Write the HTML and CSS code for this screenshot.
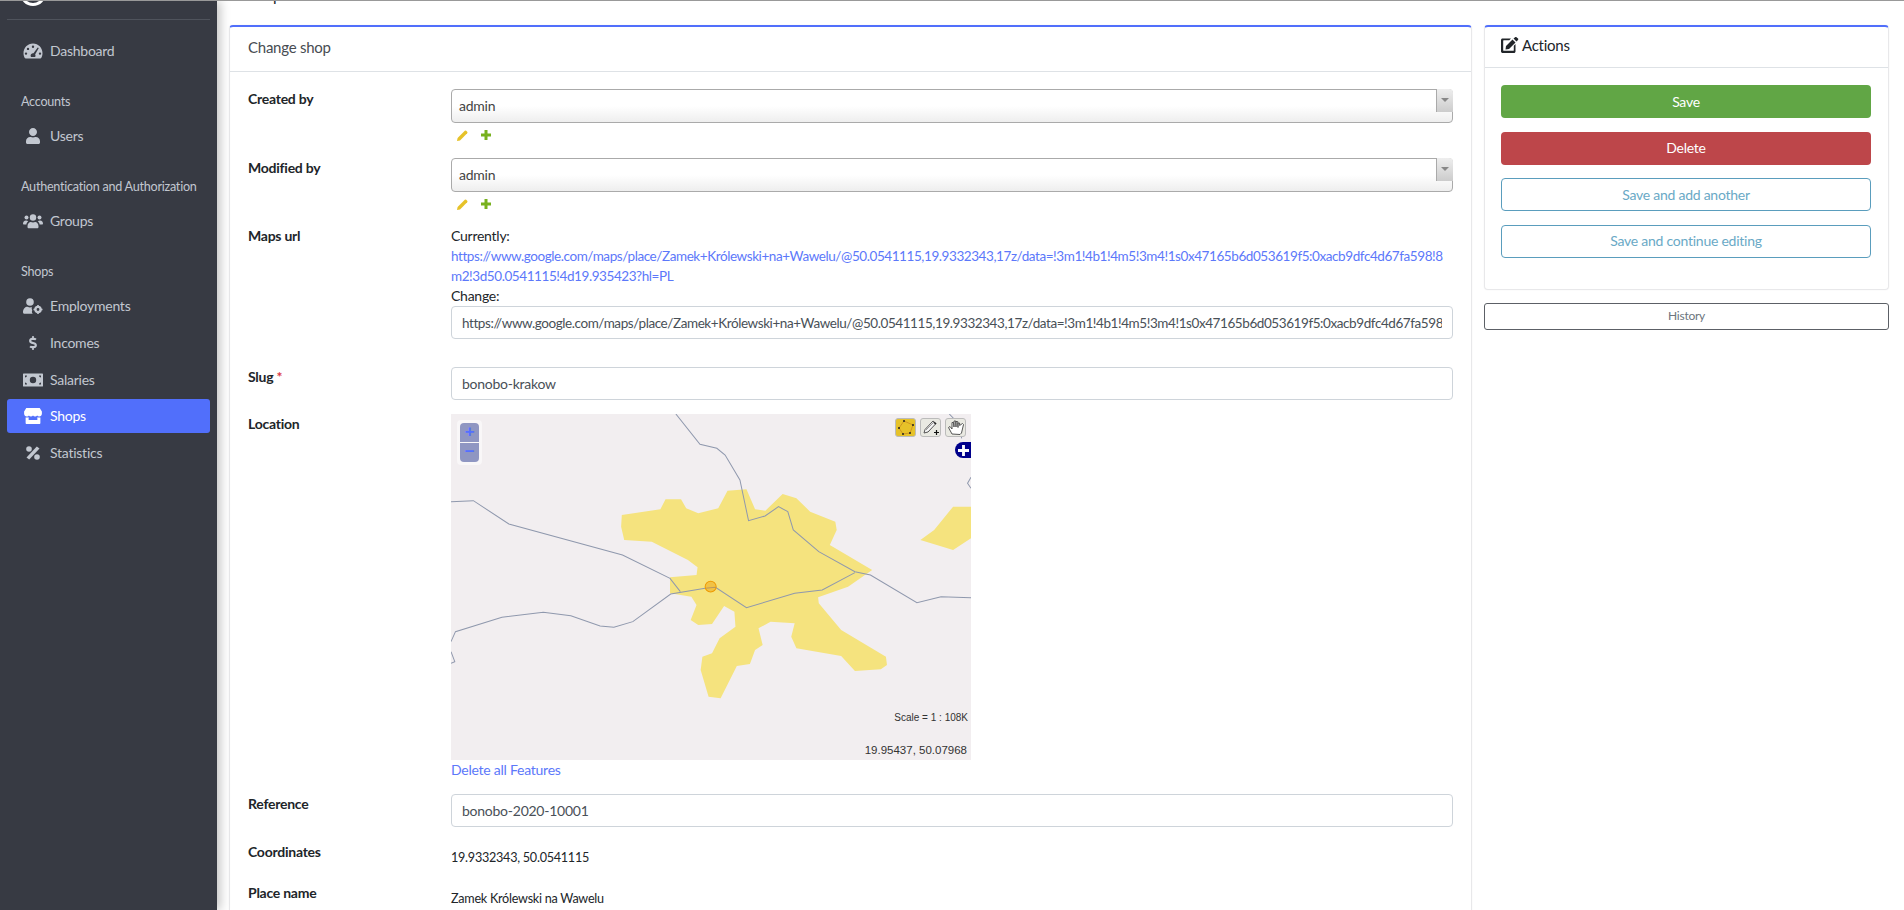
FILE: index.html
```html
<!DOCTYPE html>
<html lang="en">
<head>
    <meta charset="UTF-8">
    <meta name="viewport" content="width=device-width, initial-scale=1.0">
    <title>Change shop</title>
    <link rel="stylesheet" href="styles.css">
</head>
<body>
    <aside class="sidebar">
        <div class="brand">
            <svg class="brand-logo" width="28" height="28" viewBox="0 0 28 28"><circle cx="14" cy="14" r="11.5" fill="none" stroke="#fff" stroke-width="3"/></svg>
        </div>
        <nav class="nav">
            <a class="nav-item"><svg class="nav-icon" viewBox="0 0 20 16"><path fill="currentColor" fill-rule="evenodd" d="M10 0.5C4.6 0.5 0.5 4.8 0.5 10.2c0 1.800.5 3.400 1.300 4.800.2.300.5.500.9.500h14.600c.4 0 .7-.2.900-.5.800-1.400 1.300-3 1.300-4.800C19.500 4.800 15.400.5 10 .5zM10 2.600a1.200 1.200 0 1 1 0 2.400 1.200 1.200 0 0 1 0-2.400zM5 4.700a1.200 1.200 0 1 1 0 2.400 1.200 1.200 0 0 1 0-2.400zM3 9.400a1.200 1.200 0 1 1 0 2.400 1.200 1.200 0 0 1 0-2.400zM17 9.400a1.200 1.200 0 1 1 0 2.400 1.200 1.200 0 0 1 0-2.400zM14.700 4.500l1.100.5-3.700 6.400c.3.400.4.800.4 1.300 0 .5-.2 1-.4 1.300H8.100c-.3-.4-.5-.8-.5-1.300 0-1.300 1.100-2.400 2.400-2.400h.5z"/></svg><span>Dashboard</span></a>
            <div class="nav-header">Accounts</div>
            <a class="nav-item"><svg class="nav-icon" viewBox="0 0 448 512"><path fill="currentColor" d="M224 256c70.700 0 128-57.300 128-128S294.700 0 224 0 96 57.300 96 128s57.300 128 128 128zm89.600 32h-16.700c-22.200 10.200-46.900 16-72.900 16s-50.600-5.800-72.900-16h-16.700C60.200 288 0 348.200 0 422.400V464c0 26.500 21.500 48 48 48h352c26.500 0 48-21.500 48-48v-41.600c0-74.200-60.200-134.400-134.400-134.400z"/></svg><span>Users</span></a>
            <div class="nav-header">Authentication and Authorization</div>
            <a class="nav-item"><svg class="nav-icon" viewBox="0 0 20 16"><g fill="currentColor"><circle cx="3.500" cy="4.500" r="2"/><circle cx="16.500" cy="4.500" r="2"/><circle cx="10" cy="4.500" r="3.200"/><path d="M0 11c0-2 1-3.500 3-3.500 1 0 1.600.3 2.200.8-1 .8-1.700 1.900-1.800 3.200H1c-.6 0-1-.4-1-1zM20 11c0-2-1-3.500-3-3.500-1 0-1.600.3-2.200.8 1 .8 1.700 1.900 1.800 3.200H19c.6 0 1-.4 1-1zM4.500 13.300c0-2.500 1.600-4.300 3.300-4.300.8 0 1.300.4 2.200.4s1.400-.4 2.200-.4c1.700 0 3.300 1.800 3.300 4.300v.7c0 .8-.6 1.300-1.300 1.300H5.800c-.7 0-1.300-.5-1.300-1.300z"/></g></svg><span>Groups</span></a>
            <div class="nav-header">Shops</div>
            <a class="nav-item"><svg class="nav-icon" viewBox="0 0 20 16"><g fill="currentColor"><circle cx="7" cy="4" r="3.800"/><path d="M0 14.300c0-3.500 2.200-5.500 4.500-5.500 1 .5 1.800.7 2.500.7s1-.1 1.800-.4c-.3 1.400 0 2.300.5 3.100-.6 1-.5 2.500.5 3.500v.1H1.300C.6 15.800 0 15.100 0 14.300z"/><circle cx="15" cy="11.500" r="2.600" fill="none" stroke="currentColor" stroke-width="2.400"/><path d="M14.200 7h1.600v2h-1.600zM14.200 14h1.600v2h-1.600zM10.500 10.700h2v1.600h-2zM17.500 10.700h2v1.600h-2z"/></g></svg><span>Employments</span></a>
            <a class="nav-item"><svg class="nav-icon nav-icon-small" viewBox="0 0 288 512"><path fill="currentColor" d="M209.200 233.400l-108-31.600C88.700 198.200 80 186.500 80 173.500c0-16.300 13.200-29.500 29.500-29.500h66.300c12.200 0 24.200 3.700 34.200 10.500 6.100 4.100 14.300 3.100 19.500-2l34.800-34c7.100-6.900 6.100-18.400-1.800-24.500C238 74.800 207.400 64.100 176 64V16c0-8.800-7.200-16-16-16h-32c-8.800 0-16 7.200-16 16v48h-2.500C45.800 64-5.400 118.700.5 183.600c4.200 46.100 39.400 83.600 83.800 96.600l102.500 30c12.500 3.700 21.200 15.300 21.200 28.300 0 16.300-13.200 29.500-29.500 29.500h-66.300C100 368 88 364.300 78 357.500c-6.100-4.100-14.300-3.100-19.500 2l-34.800 34c-7.100 6.900-6.100 18.400 1.800 24.500 24.500 19.200 55.100 29.900 86.500 30v48c0 8.800 7.200 16 16 16h32c8.800 0 16-7.200 16-16v-48.200c46.600-.9 90.300-28.600 105.700-72.700 21.500-61.600-14.600-124.800-72.500-141.700z"/></svg><span>Incomes</span></a>
            <a class="nav-item"><svg class="nav-icon" viewBox="0 0 20 13"><path fill="currentColor" fill-rule="evenodd" d="M.6 0h18.800c.3 0 .6.300.6.600v11.800c0 .3-.3.600-.6.600H.6c-.3 0-.6-.3-.6-.6V.6C0 .3.300 0 .6 0zM10 3.300a3.200 3.200 0 1 0 0 6.400 3.200 3.200 0 0 0 0-6.400zM2 2v2c1.100 0 2-.9 2-2zM16 2c0 1.100.9 2 2 2V2zM2 9v2h2c0-1.100-.9-2-2-2zM18 9c-1.100 0-2 .9-2 2h2z"/></svg><span>Salaries</span></a>
            <a class="nav-item active"><svg class="nav-icon" viewBox="0 0 20 18"><path fill="currentColor" fill-rule="evenodd" d="M3 0h14c.4 0 .7.200.9.500L20 4v2.500c0 1.800-1.300 3-3 3-.9 0-1.800-.4-2.300-1.100-.6.700-1.500 1.100-2.400 1.100s-1.700-.4-2.300-1.100c-.6.700-1.400 1.100-2.300 1.100s-1.800-.4-2.400-1.100C5 9.100 4 9.500 3 9.500c-1.700 0-3-1.200-3-3V4L2.100.5C2.300.2 2.600 0 3 0zM1.700 10.600c.4.100.9.200 1.300.2.800 0 1.500-.2 2.100-.5v3.200h9.800v-3.200c.6.300 1.300.5 2.100.5.400 0 .9-.1 1.300-.2v6.200c0 .7-.5 1.200-1.200 1.200H2.900c-.7 0-1.200-.5-1.200-1.200z"/></svg><span>Shops</span></a>
            <a class="nav-item"><svg class="nav-icon nav-icon-small" viewBox="0 0 14 14"><g fill="currentColor"><circle cx="3" cy="3" r="2.800"/><circle cx="11" cy="11" r="2.800"/><path d="M10.800.5l2.700 2L3.200 13.500l-2.700-2z"/></g></svg><span>Statistics</span></a>
        </nav>
    </aside>

    <main class="content">
        <h1 class="page-title">Shops</h1>
        <div class="columns">
            <section class="card">
                <div class="card-header">Change shop</div>
                <form class="form">
                    <div class="field field-first">
                        <label>Created by</label>
                        <div>
                            <div class="select"><span>admin</span><b class="select-arrow"></b></div>
                            <div class="related">
                                <svg width="11" height="11" viewBox="0 0 11 11"><path fill="#e6c229" d="M0 11l.6-3L7.800.8a1 1 0 0 1 1.400 0l1 1a1 1 0 0 1 0 1.400L3 10.400z"/></svg>
                                <svg width="10" height="10" viewBox="0 0 10 10"><path fill="#78b11e" d="M3.500 0h3v3.500H10v3H6.500V10h-3V6.500H0v-3h3.500z"/></svg>
                            </div>
                        </div>
                    </div>
                    <div class="field">
                        <label>Modified by</label>
                        <div>
                            <div class="select"><span>admin</span><b class="select-arrow"></b></div>
                            <div class="related">
                                <svg width="11" height="11" viewBox="0 0 11 11"><path fill="#e6c229" d="M0 11l.6-3L7.800.8a1 1 0 0 1 1.400 0l1 1a1 1 0 0 1 0 1.400L3 10.400z"/></svg>
                                <svg width="10" height="10" viewBox="0 0 10 10"><path fill="#78b11e" d="M3.500 0h3v3.500H10v3H6.500V10h-3V6.500H0v-3h3.500z"/></svg>
                            </div>
                        </div>
                    </div>
                    <div class="field field-url">
                        <label>Maps url</label>
                        <div>
                            <div class="line">Currently:</div>
                            <a class="url-link">https://www.google.com/maps/place/Zamek+Królewski+na+Wawelu/@50.0541115,19.9332343,17z/data=!3m1!4b1!4m5!3m4!1s0x47165b6d053619f5:0xacb9dfc4d67fa598!8m2!3d50.0541115!4d19.935423?hl=PL</a>
                            <div class="line">Change:</div>
                            <input class="input input-url" type="text" value="https://www.google.com/maps/place/Zamek+Królewski+na+Wawelu/@50.0541115,19.9332343,17z/data=!3m1!4b1!4m5!3m4!1s0x47165b6d053619f5:0xacb9dfc4d67fa598!8m2!3d50.0541115!4d19.935423?hl=PL">
                        </div>
                    </div>
                    <div class="field field-slug">
                        <label>Slug <em>*</em></label>
                        <input class="input" type="text" value="bonobo-krakow">
                    </div>
                    <div class="field field-location">
                        <label>Location</label>
                        <div>
                            <div class="map">
                                <svg class="map-layer" viewBox="32 -198 1510 1038" preserveAspectRatio="none">
                                    <polygon fill="#f5e37e" points="528,105 640,88 655,58 700,58 715,85 750,100 808,85 835,32 890,28 915,88 945,92 995,42 1035,55 1075,95 1148,125 1152,150 1132,195 1255,270 1185,320 1098,352 1100,370 1165,450 1295,530 1298,555 1280,568 1205,573 1165,528 1035,505 1020,470 1030,430 960,425 925,445 937,495 915,510 900,552 862,558 815,655 780,650 757,570 762,530 790,520 812,475 858,440 855,395 825,378 790,432 750,435 728,420 745,375 730,350 668,340 668,292 745,285 748,262 720,240 615,185 535,180 526,140"/>
                                    <polygon fill="#f5e37e" points="1395,180 1435,150 1490,80 1542,80 1542,175 1490,210"/>
                                    <g class="roads">
                                        <polyline vector-effect="non-scaling-stroke" points="32,65 97,62 200,132 530,225 668,295 698,335"/>
                                        <polyline vector-effect="non-scaling-stroke" points="685,-198 755,-107 804,-95 828,-75 871,0 896,122 944,108 983,80 1010,95 1026,150 1100,215 1205,275 1250,285 1385,368 1455,350 1542,353"/>
                                        <polyline vector-effect="non-scaling-stroke" points="32,485 45,455 180,412 300,397 380,407 465,438 505,442 560,425 670,342 770,325 800,322 890,383 1030,340 1110,330 1205,278"/>
                                        <polyline vector-effect="non-scaling-stroke" points="32,515 43,545 32,550"/>
                                        <polyline vector-effect="non-scaling-stroke" points="1479,-198 1505,-170 1515,-125"/>
                                        <polyline vector-effect="non-scaling-stroke" points="1542,-8 1532,10 1542,25"/>
                                    </g>
                                    <circle cx="786" cy="320" r="16" fill="#ee9900" fill-opacity=".45" stroke="#ee9900" stroke-width="1" vector-effect="non-scaling-stroke"/>
                                </svg>
                                <div class="map-zoom">
                                    <span class="zoom-btn zoom-in">+</span>
                                    <span class="zoom-btn zoom-out">−</span>
                                </div>
                                <div class="map-tools">
                                    <span class="tool tool-on"><svg width="20" height="19" viewBox="0 0 20 19"><polygon points="3,10 8,3 17,7 14,15 7,16" fill="none" stroke="#c98a20" stroke-width=".8"/><g fill="#222"><circle cx="3" cy="10" r="1"/><circle cx="8" cy="3" r="1"/><circle cx="17" cy="7" r="1"/><circle cx="14" cy="15" r="1"/><circle cx="7" cy="16" r="1"/></g></svg></span>
                                    <span class="tool"><svg width="20" height="19" viewBox="0 0 20 19"><path d="M3 15l1-3.500L12 3l3 2.500-8 8.500z" fill="#f4f4f4" stroke="#555" stroke-width="1"/><path d="M5 12l8-8" stroke="#999" stroke-width="1"/><path d="M13 4.500l2 1.500" stroke="#222" stroke-width="1.500"/><path d="M15.500 12v5M13 14.500h5" stroke="#111" stroke-width="1.200"/></svg></span>
                                    <span class="tool"><svg width="20" height="19" viewBox="0 0 20 19"><path d="M6 16L2.500 9.500 4 8.500l2 2.500V4.500h1.500L8 9V3h1.700L10 9V3.500h1.700L12 9.500V5h1.600v2.500L16.500 5.500l1 1L15.500 15l-1.500 1.500z" fill="#fff" stroke="#444" stroke-width=".9"/></svg></span>
                                </div>
                                <span class="map-add"><svg width="11" height="11" viewBox="0 0 10 10"><path fill="#fff" d="M3.700 0h2.600v3.700H10v2.600H6.300V10H3.700V6.300H0V3.700h3.700z"/></svg></span>
                                <span class="map-scale">Scale = 1 : 108K</span>
                                <span class="map-pos">19.95437, 50.07968</span>
                            </div>
                            <a class="delete-link">Delete all Features</a>
                        </div>
                    </div>
                    <div class="field">
                        <label>Reference</label>
                        <input class="input" type="text" value="bonobo-2020-10001">
                    </div>
                    <div class="field">
                        <label>Coordinates</label>
                        <div class="readonly">19.9332343, 50.0541115</div>
                    </div>
                    <div class="field">
                        <label>Place name</label>
                        <div class="readonly">Zamek Królewski na Wawelu</div>
                    </div>
                </form>
            </section>

            <aside class="side">
                <section class="card">
                    <div class="card-header card-header-actions">
                        <svg width="18" height="16" viewBox="0 0 18 16"><path fill="#212529" fill-rule="evenodd" d="M1.500 1.500H10L8.300 3.200H2.800a.6.600 0 0 0-.6.600v9.400c0 .3.300.6.600.6h9.400c.3 0 .6-.3.600-.6V8.700l1.700-1.700v7.500c0 .8-.7 1.500-1.500 1.500h-11C.7 16 0 15.300 0 14.500V3c0-.8.700-1.500 1.500-1.500z"/><path fill="#212529" d="M5 9l-.5 3.500L8 12l6.500-6.500-3-3zM12.500 1.500l3 3 1.500-1.500c.4-.4.400-1 0-1.400L15.500.3c-.4-.4-1-.4-1.400 0z"/></svg>
                        Actions
                    </div>
                    <div class="actions">
                        <button class="btn btn-save">Save</button>
                        <button class="btn btn-delete">Delete</button>
                        <button class="btn btn-outline">Save and add another</button>
                        <button class="btn btn-outline">Save and continue editing</button>
                    </div>
                </section>
                <button class="btn-history">History</button>
            </aside>
        </div>
    </main>
</body>
</html>
```

FILE: styles.css
```css
* {
    margin: 0;
    padding: 0;
    box-sizing: border-box;
}
body {
    display: flex;
    height: 910px;
    overflow: hidden;
    border-top: 1px solid #999;
    background-color: #fff;
    color: #212529;
    font-family: Lato, "Noto Sans", sans-serif;
    font-size: 14px;
    line-height: 20px;
    letter-spacing: -0.25px;
}

/* sidebar */
.sidebar {
    flex: 0 0 217px;
    padding: 0 7px;
    background-color: #373a43;
    box-shadow: 3px 0 10px rgba(0,0,0,0.25);
    position: relative;
    z-index: 1;
}
.brand {
    height: 19px;
    overflow: hidden;
    border-bottom: 1px solid #4f535c;
    padding-left: 12px;
}
.brand-logo {
    display: block;
    margin-top: -22px;
}
.nav {
    display: flex;
    flex-direction: column;
    gap: 2.8px;
    margin-top: 14px;
    color: #c2c7d0;
}
.nav-item {
    display: flex;
    align-items: center;
    height: 34px;
    border-radius: 3px;
}
.nav-item span {
    margin-left: 7px;
}
.nav-item.active {
    background-color: #516ffb;
    color: #fff;
}
.nav-icon {
    width: 20px;
    height: 16px;
    margin-left: 16px;
    flex: none;
}
.nav-icon-small {
    height: 14px;
}
.nav-header {
    height: 45.4px;
    padding: 21px 0 0 14px;
    font-size: 12.6px;
    white-space: nowrap;
}

/* main area */
.content {
    flex: 1;
    min-width: 0;
    padding-left: 12px;
    padding-right: 15px;
}
.page-title {
    margin: -16px 0 20px 19px;
    height: 20px;
    font-size: 15.5px;
    font-weight: 400;
    line-height: 20px;
}
.columns {
    display: grid;
    grid-template-columns: 1243px 405px;
    gap: 12px;
    align-items: start;
}
.card {
    border: 1px solid #e8e8ea;
    border-top: 2px solid #516ffb;
    border-radius: 4px;
    background-color: #fff;
    box-shadow: 0 0 2px rgba(0,0,0,0.06);
}
.card-header {
    height: 45px;
    padding: 10px 18px 0;
    border-bottom: 1px solid #dee2e6;
    color: #474c52;
    font-size: 15px;
}
.form {
    padding: 17px 18px 30px;
}
.field {
    display: grid;
    grid-template-columns: 203px 1fr;
    margin-bottom: 15px;
}
.field label {
    font-weight: 700;
}
.field label em {
    color: #dc3545;
    font-style: normal;
}
.field-first {
    margin-bottom: 16px;
}
.field-url {
    margin-bottom: 28px;
}
.field-slug {
    margin-bottom: 14px;
}
.field-location {
    margin-bottom: 14px;
}

/* select2 style box */
.select {
    display: flex;
    justify-content: space-between;
    height: 34px;
    padding-left: 7px;
    border: 1px solid #aaa;
    border-radius: 4px;
    background: linear-gradient(#fff 50%, #eee);
    color: #444;
    line-height: 31px;
}
.select-arrow {
    position: relative;
    width: 17px;
    height: 23px;
    margin: -1px -1px 0 0;
    border-left: 1px solid #aaa;
    border-radius: 0 4px 0 0;
    background: linear-gradient(#eee, #ccc);
}
.select-arrow::after {
    content: "";
    position: absolute;
    left: 4px;
    top: 9px;
    border: 4px solid transparent;
    border-top: 4px solid #888;
}
.related {
    display: flex;
    align-items: center;
    gap: 13px;
    height: 14px;
    margin: 5px 0 0 6px;
}
.input {
    display: block;
    width: 100%;
    height: 33px;
    padding: 0 10px;
    border: 1px solid #ced4da;
    border-radius: 4px;
    color: #495057;
    font: inherit;
    letter-spacing: inherit;
    background-color: #fff;
}
.input-url {
    font-size: 13.5px;
    letter-spacing: -0.42px;
}
.line {
    height: 20px;
}
.url-link {
    display: block;
    color: #5c78fa;
    font-size: 13.5px;
    letter-spacing: -0.42px;
    word-break: break-all;
}
.readonly {
    padding-top: 6px;
    font-size: 12.6px;
}

/* map widget */
.map {
    position: relative;
    width: 520px;
    height: 346px;
    overflow: hidden;
    background-color: #f2eef0;
}
.map-layer {
    display: block;
    width: 520px;
    height: 346px;
}
.roads {
    fill: none;
    stroke: #8f98ad;
    stroke-width: 1;
}
.map-zoom {
    position: absolute;
    left: 6px;
    top: 6px;
    display: flex;
    flex-direction: column;
    gap: 1px;
    padding: 3px;
    border-radius: 4px;
    background-color: rgba(255,255,255,0.5);
}
.zoom-btn {
    width: 19px;
    height: 19px;
    background-color: #8f96c2;
    color: #5470ff;
    font-family: "Liberation Sans", sans-serif;
    font-size: 17px;
    font-weight: 700;
    line-height: 17px;
    text-align: center;
}
.zoom-in {
    border-radius: 4px 4px 0 0;
}
.zoom-out {
    border-radius: 0 0 4px 4px;
}
.map-tools {
    position: absolute;
    left: 444px;
    top: 4px;
    display: flex;
    gap: 4px;
}
.tool {
    display: block;
    width: 21px;
    height: 19px;
    border: 1px solid #bbb;
    border-radius: 3px;
    background-color: #e9e9e2;
}
.tool svg {
    display: block;
    margin: -1px 0 0 0;
}
.tool-on {
    background-color: #e6c229;
}
.map-add {
    position: absolute;
    left: 504px;
    top: 28px;
    display: flex;
    align-items: center;
    justify-content: center;
    width: 16px;
    height: 16px;
    border-radius: 8px 0 0 8px;
    background-color: #00008b;
}
.map-scale, .map-pos {
    position: absolute;
    right: 4px;
    color: #333;
    font-family: "Liberation Sans", sans-serif;
    letter-spacing: 0;
}
.map-scale {
    top: 294px;
    right: 3px;
    font-size: 10px;
}
.map-pos {
    top: 326px;
    font-size: 11.5px;
}
.delete-link {
    display: block;
    color: #5c78fa;
}

/* actions column */
.card-header-actions {
    display: flex;
    align-items: center;
    gap: 3px;
    height: 41px;
    padding: 0 17px 4px 16px;
    color: #212529;
}
.actions {
    display: flex;
    flex-direction: column;
    gap: 13.5px;
    padding: 17px 17px 31px 16px;
}
.btn {
    height: 33px;
    border: 1px solid transparent;
    border-radius: 4px;
    background: none;
    color: #fff;
    font: inherit;
    letter-spacing: inherit;
}
.btn-save {
    background-color: #61a645;
}
.btn-delete {
    background-color: #bd464a;
}
.btn-outline {
    border-color: #5a9dbd;
    color: #6aa9c6;
}
.btn-history {
    display: block;
    width: 100%;
    height: 27px;
    margin-top: 13px;
    border: 1px solid #5c6066;
    border-radius: 3px;
    background-color: #fff;
    color: #6c757d;
    font: inherit;
    font-size: 12px;
    letter-spacing: inherit;
}
```
